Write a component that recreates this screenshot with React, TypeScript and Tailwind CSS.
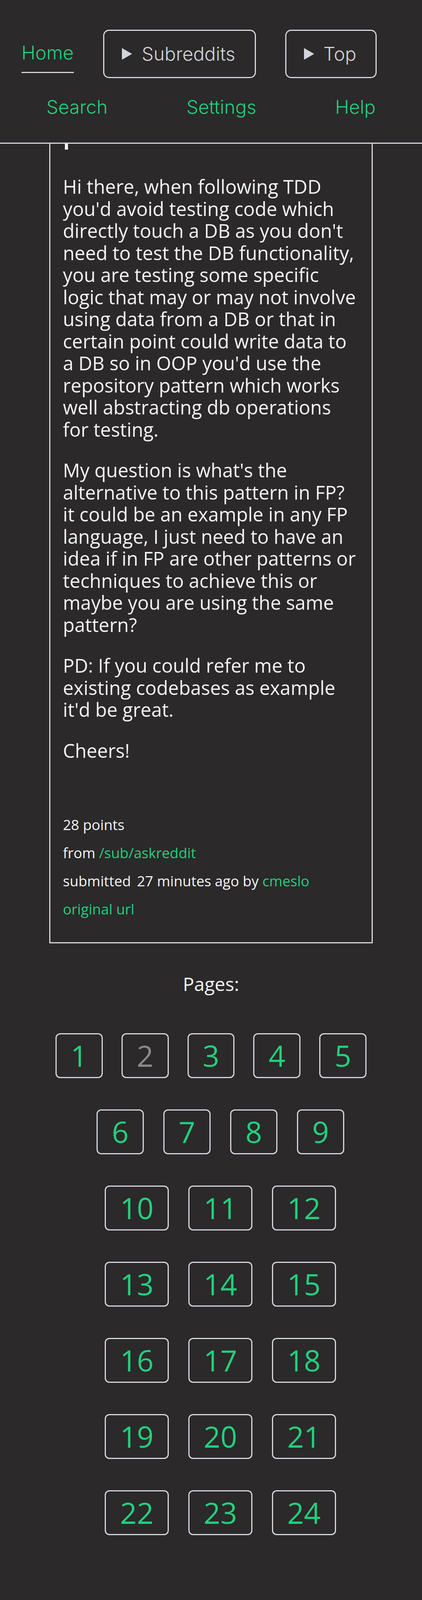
import React from "react";

const paragraphs = [
  "Hi there, when following TDD you'd avoid testing code which directly touch a DB as you don't need to test the DB functionality, you are testing some specific logic that may or may not involve using data from a DB or that in certain point could write data to a DB so in OOP you'd use the repository pattern which works well abstracting db operations for testing.",
  "My question is what's the alternative to this pattern in FP? it could be an example in any FP language, I just need to have an idea if in FP are other patterns or techniques to achieve this or maybe you are using the same pattern?",
  "PD: If you could refer me to existing codebases as example it'd be great.",
  "Cheers!",
];

const pageRows = [
  [1, 2, 3, 4, 5],
  [6, 7, 8, 9],
  [10, 11, 12],
  [13, 14, 15],
  [16, 17, 18],
  [19, 20, 21],
  [22, 23, 24],
];

const currentPage = 2;

function Caret() {
  return (
    <svg width="26" height="30" viewBox="0 0 26 30" className="shrink-0">
      <polygon points="0,0 26,15 0,30" fill="#d1d5db" />
    </svg>
  );
}

function Header() {
  return (
    <header className="border-b-[3px] border-[#d4d7dc] pt-[76px] pb-[62px] font-['Inter',sans-serif] text-[48px] font-light">
      <div className="flex items-center gap-[75px] pl-[55px]">
        <a className="border-b-[3px] border-[#d4d7dc] pt-[16px] pb-[20px] leading-[58px] text-[#22d07d]">
          Home
        </a>
        <button className="flex h-[124px] w-[391px] items-center gap-[25px] rounded-[15px] border-[3px] border-[#d4d7dc] pl-[45px] text-[#d1d5db]">
          <Caret />
          <span className="leading-[58px]">Subreddits</span>
        </button>
        <button className="flex h-[124px] w-[234px] items-center gap-[24px] rounded-[15px] border-[3px] border-[#d4d7dc] pl-[45px] text-[#d1d5db]">
          <Caret />
          <span className="leading-[58px]">Top</span>
        </button>
      </div>
      <nav className="mt-[45px] flex justify-around px-[18px] leading-[58px] text-[#22d07d]">
        <a>Search</a>
        <a>Settings</a>
        <a>Help</a>
      </nav>
    </header>
  );
}

function Post() {
  return (
    <article className="mx-auto w-[828px] border-[3px] border-t-0 border-[#d4d7dc] px-[32px] pb-[60px] text-[#f5f5f5]">
      {/* tail of the title, hidden under the header */}
      <div className="ml-[5px] h-[15px] w-[8px] bg-[#f5f5f5]" />
      <div className="mt-[66px] flex flex-col gap-[48px] text-[48.7px] leading-[56.5px]">
        {paragraphs.map((p) => (
          <p key={p.slice(0, 12)}>{p}</p>
        ))}
      </div>
      <div className="mt-[138px] flex flex-col gap-[23px] text-[36.5px] leading-[49px]">
        <div>28 points</div>
        <div>
          from <a className="text-[#22d07d]">/sub/askreddit</a>
        </div>
        <div>
          <span className="mr-[6px]">submitted</span> 27 minutes ago by{" "}
          <a className="text-[#22d07d]">cmeslo</a>
        </div>
        <div>
          <a className="text-[#22d07d]">original url</a>
        </div>
      </div>
    </article>
  );
}

function Pagination() {
  return (
    <section className="mt-[71px]">
      <h3 className="text-center text-[48px] leading-[65px] text-[#f5f5f5]">Pages:</h3>
      <div className="mt-[94px] flex flex-col gap-[80px]">
        {pageRows.map((row, i) => (
          <div
            key={i}
            className={i === 0 ? "flex justify-center gap-[48px]" : "flex justify-center gap-[50px] pl-[48px]"}
          >
            {row.map((n) => (
              <a
                key={n}
                className={
                  n === currentPage
                    ? "rounded-[12px] border-[3px] border-[#d4d7dc] px-[36px] py-[3px] text-[75px] leading-[103px] text-[#8a8a8a]"
                    : "rounded-[12px] border-[3px] border-[#d4d7dc] px-[36px] py-[3px] text-[75px] leading-[103px] text-[#22d07d]"
                }
              >
                {n}
              </a>
            ))}
          </div>
        ))}
      </div>
    </section>
  );
}

export default function App() {
  return (
    <div className="min-h-screen bg-[#2b292a] font-['Open_Sans','Noto_Sans',sans-serif]">
      <Header />
      <Post />
      <Pagination />
    </div>
  );
}
